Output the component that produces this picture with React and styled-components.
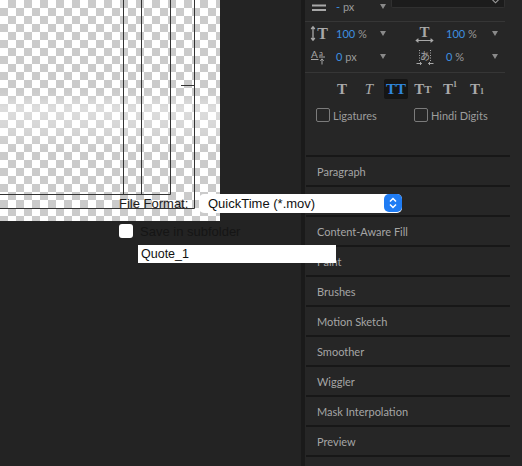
import styled, { createGlobalStyle } from "styled-components";

const GlobalStyle = createGlobalStyle`
  html, body {
    margin: 0;
    padding: 0;
    background: #232323;
  }
  body {
    width: 522px;
    height: 466px;
    overflow: hidden;
  }
`;

const Page = styled.div`
  position: relative;
  display: flex;
  width: 522px;
  height: 466px;
  overflow: hidden;
  background: #232323;
  font-family: Lato, "Noto Sans", sans-serif;
`;

const Workspace = styled.main`
  flex: none;
  width: 301px;
`;

const Canvas = styled.div`
  position: relative;
  width: 220px;
  height: 221px;
  background-color: #fff;
  background-image: repeating-conic-gradient(#cbcbcb 0 25%, #fff 0 50%);
  background-size: 16px 16px;

  &::after {
    content: "";
    position: absolute;
    inset: 0;
    background: linear-gradient(
      to bottom,
      rgba(255, 255, 255, 0) 92px,
      rgba(255, 255, 255, 0.35) 108px,
      rgba(255, 255, 255, 0.2) 130px,
      rgba(255, 255, 255, 0) 150px
    );
  }
`;

const Guides = styled.svg`
  position: absolute;
  inset: 0;
  z-index: 1;
`;

const Panel = styled.aside`
  flex: none;
  width: 217px;
  border-left: 4px solid #1a1a1a;
  background: #262626;
  display: flex;
  flex-direction: column;
`;

const Character = styled.section`
  flex: none;
  height: 155px;
  display: flex;
  flex-direction: column;
`;

const TopRow = styled.div`
  display: grid;
  grid-template-columns: 26px 44px 11px 114px;
  align-items: center;
  height: 10px;
  padding-left: 5px;
`;

const FieldRow = styled.div`
  display: grid;
  grid-template-columns: 26px 44px 36px 30px 46px 10px;
  align-items: center;
  height: 23px;
  padding-left: 5px;
`;

const Divider = styled.div`
  flex: none;
  width: 200px;
  height: 1px;
  background: #363636;
  margin-top: ${(p) => p.$top}px;
`;

const Value = styled.span`
  font-size: 11px;
  color: #9a9a9a;
  white-space: nowrap;
`;

const Num = styled.span`
  color: #3d8fe0;
`;

const Caret = styled.span`
  width: 0;
  height: 0;
  border-left: 3px solid transparent;
  border-right: 3px solid transparent;
  border-top: 5px solid #8a8a8a;
`;

const FontBox = styled.div`
  height: 12px;
  margin-top: -10px;
  box-sizing: border-box;
  background: #1c1c1c;
  border: 1px solid #303030;
  border-top: 0;
  border-radius: 0 0 2px 2px;
  display: flex;
  justify-content: flex-end;
  align-items: center;
  padding-right: 5px;
`;

const Icon = styled.svg`
  display: block;
  overflow: visible;
  margin-left: ${(p) => p.$shift || 0}px;
`;

const StyleBar = styled.div`
  display: flex;
  gap: 3px;
  height: 20px;
  margin-top: 6px;
  padding-left: 25px;
`;

const StyleButton = styled.button`
  width: 24px;
  height: 20px;
  padding: 0;
  border: 0;
  border-radius: 2px;
  background: ${(p) => (p.$active ? "#151515" : "transparent")};
  color: ${(p) => (p.$active ? "#2f86dd" : "#a9a9a9")};
  font-family: "Liberation Serif", "DejaVu Serif", serif;
  font-size: 15px;
  font-weight: ${(p) => (p.$italic ? "normal" : "bold")};
  font-style: ${(p) => (p.$italic ? "italic" : "normal")};
  display: flex;
  align-items: center;
  justify-content: center;
  line-height: 1;
`;

const Small = styled.span`
  font-size: ${(p) => p.$size}px;
  position: relative;
  top: ${(p) => p.$shift}px;
`;

const Options = styled.div`
  display: flex;
  margin-top: 9px;
  padding-left: 11px;
`;

const Option = styled.label`
  display: flex;
  align-items: center;
  gap: 3px;
  width: 98px;
  height: 14px;
  font-size: 11px;
  color: #9d9d9d;
`;

const Box = styled.span`
  flex: none;
  width: 14px;
  height: 14px;
  box-sizing: border-box;
  border: 1.5px solid #7b7b7b;
  border-radius: 2px;
`;

const Tab = styled.div`
  flex: none;
  box-sizing: border-box;
  width: 204px;
  height: 30px;
  margin-left: 1px;
  padding-left: 11px;
  border-top: 2px solid #171717;
  display: flex;
  align-items: center;
  font-size: 11px;
  color: #a5a5a5;
`;

const ExportSheet = styled.div`
  position: absolute;
  left: 119px;
  top: 194px;
  z-index: 2;
  display: flex;
  flex-direction: column;
  font-family: "Liberation Sans", Arial, sans-serif;
  font-size: 13px;
`;

const FormatRow = styled.div`
  display: flex;
  align-items: center;
  height: 19px;
`;

const FormatLabel = styled.span`
  width: 80px;
  color: #1b1b1b;
`;

const Select = styled.div`
  width: 203px;
  height: 19px;
  box-sizing: border-box;
  padding-left: 9px;
  border-radius: 5px;
  background: #fff;
  color: #111;
  display: flex;
  justify-content: space-between;
  align-items: flex-start;
  line-height: 19px;
`;

const Stepper = styled.span`
  width: 18px;
  height: 18px;
  border-radius: 5px;
  background: #1f7cf4;
  display: flex;
  align-items: center;
  justify-content: center;
`;

const SaveRow = styled.label`
  display: flex;
  align-items: center;
  gap: 7px;
  height: 14px;
  margin-top: 11px;
  color: #151515;
`;

const WhiteBox = styled.span`
  width: 14px;
  height: 14px;
  border-radius: 3px;
  background: #fff;
`;

const NameField = styled.div`
  width: 198px;
  height: 18px;
  margin-top: 7px;
  margin-left: 19px;
  box-sizing: border-box;
  padding-left: 3px;
  background: #fff;
  color: #111;
  font-size: 12.5px;
  line-height: 18px;
`;

const serifT = {
  fontFamily: '"Liberation Serif", serif',
  fontWeight: "bold",
  fill: "#a8a8a8",
};

const sansText = {
  fontFamily: "Lato, sans-serif",
  fill: "#a8a8a8",
};

function LeadingIcon() {
  return (
    <Icon width="20" height="17" viewBox="0 0 20 17">
      <path d="M3 2v13M1.2 4L3 1.7 4.8 4M1.2 13L3 15.3 4.8 13" stroke="#a8a8a8" strokeWidth="1.3" fill="none" />
      <text x="12.5" y="14" fontSize="16" textAnchor="middle" style={serifT}>T</text>
    </Icon>
  );
}

function TrackingIcon() {
  return (
    <Icon width="20" height="19" viewBox="0 0 20 19" $shift={-1}>
      <text x="9.5" y="12.5" fontSize="15" textAnchor="middle" style={serifT}>T</text>
      <path d="M1.5 16.5h16M3.5 14.7L1.3 16.5 3.5 18.3M15.5 14.7L17.7 16.5 15.5 18.3" stroke="#a8a8a8" strokeWidth="1.2" fill="none" />
    </Icon>
  );
}

function BaselineIcon() {
  return (
    <Icon width="20" height="17" viewBox="0 0 20 17">
      <text x="1" y="10" fontSize="10" style={sansText}>A</text>
      <text x="9" y="7.5" fontSize="8" style={sansText}>a</text>
      <path d="M1 11.5h7.5M9 9h6M12 16.5V11M10.3 12.8L12 10.8 13.7 12.8" stroke="#a8a8a8" strokeWidth="1" fill="none" />
    </Icon>
  );
}

function TsumeIcon() {
  return (
    <Icon width="20" height="18" viewBox="0 0 20 18" $shift={-1}>
      <path d="M4.5 2v11M15.5 2v11" stroke="#a8a8a8" strokeWidth="1" strokeDasharray="1 1.5" />
      <text x="10" y="11.5" fontSize="10" textAnchor="middle" style={{ fontFamily: '"Noto Sans CJK JP", sans-serif', fill: "#a8a8a8" }}>あ</text>
      <path d="M1.5 15.5h5M5 14l1.6 1.5L5 17M18.5 15.5h-5M15 14l-1.6 1.5L15 17" stroke="#a8a8a8" strokeWidth="1" fill="none" />
    </Icon>
  );
}

function MenuIcon() {
  return (
    <Icon width="14" height="10" viewBox="0 0 14 10" $shift={2}>
      <rect x="0" y="2.5" width="14" height="2" fill="#a8a8a8" />
      <rect x="0" y="7" width="14" height="2" fill="#a8a8a8" />
    </Icon>
  );
}

// "Tracker" sits under the format select; the last row is scrolled off
const tabs = [
  "Paragraph",
  "Tracker",
  "Content-Aware Fill",
  "Paint",
  "Brushes",
  "Motion Sketch",
  "Smoother",
  "Wiggler",
  "Mask Interpolation",
  "Preview",
  "",
];

export default function App() {
  return (
    <Page>
      <GlobalStyle />
      <Workspace>
        <Canvas>
          <Guides width="220" height="221" viewBox="0 0 220 221">
            <g stroke="#333" strokeWidth="1" fill="none">
              <path d="M123.5 0V194.5M141.5 0V194.5M170.5 0V194.5M194.5 0V208.5" />
              <path d="M0 194.5H170.5M0 208.5H194.5M181 85.5H194.5" />
            </g>
          </Guides>
        </Canvas>
      </Workspace>

      <Panel>
        <Character>
          <TopRow>
            <MenuIcon />
            <Value>
              <Num>-</Num> px
            </Value>
            <Caret />
            <FontBox>
              <svg width="7" height="5" viewBox="0 0 7 5">
                <path d="M0.5 0.8L3.5 3.8 6.5 0.8" stroke="#9a9a9a" strokeWidth="1.1" fill="none" />
              </svg>
            </FontBox>
          </TopRow>
          <Divider $top={11} />
          <FieldRow>
            <LeadingIcon />
            <Value>
              <Num>100</Num> %
            </Value>
            <Caret />
            <TrackingIcon />
            <Value>
              <Num>100</Num> %
            </Value>
            <Caret />
          </FieldRow>
          <FieldRow>
            <BaselineIcon />
            <Value>
              <Num>0</Num> px
            </Value>
            <Caret />
            <TsumeIcon />
            <Value>
              <Num>0</Num> %
            </Value>
            <Caret />
          </FieldRow>
          <Divider $top={4} />
          <StyleBar>
            <StyleButton>T</StyleButton>
            <StyleButton $italic>T</StyleButton>
            <StyleButton $active>TT</StyleButton>
            <StyleButton>
              T<Small $size={11} $shift={0}>T</Small>
            </StyleButton>
            <StyleButton>
              T<Small $size={8} $shift={-4}>1</Small>
            </StyleButton>
            <StyleButton>
              T<Small $size={8} $shift={3}>1</Small>
            </StyleButton>
          </StyleBar>
          <Options>
            <Option>
              <Box />
              Ligatures
            </Option>
            <Option>
              <Box />
              Hindi Digits
            </Option>
          </Options>
        </Character>

        {tabs.map((name, i) => (
          <Tab key={i}>{name}</Tab>
        ))}
      </Panel>

      <ExportSheet>
        <FormatRow>
          <FormatLabel>File Format:</FormatLabel>
          <Select>
            QuickTime (*.mov)
            <Stepper>
              <svg width="8" height="12" viewBox="0 0 8 12">
                <path d="M1 4.5L4 1.5 7 4.5M1 7.5L4 10.5 7 7.5" stroke="#fff" strokeWidth="1.5" fill="none" />
              </svg>
            </Stepper>
          </Select>
        </FormatRow>
        <SaveRow>
          <WhiteBox />
          Save in subfolder
        </SaveRow>
        <NameField>Quote_1</NameField>
      </ExportSheet>
    </Page>
  );
}
